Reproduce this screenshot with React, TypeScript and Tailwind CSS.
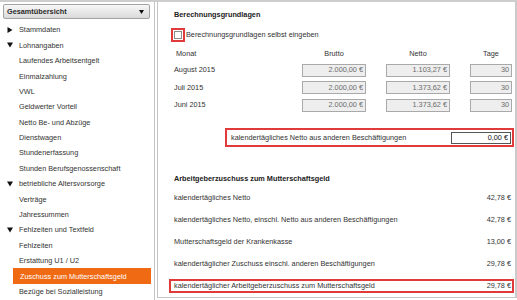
import React from "react";

const nav: { label: string; kind: "open" | "closed" | "item" | "active" }[] = [
  { label: "Stammdaten", kind: "closed" },
  { label: "Lohnangaben", kind: "open" },
  { label: "Laufendes Arbeitsentgelt", kind: "item" },
  { label: "Einmalzahlung", kind: "item" },
  { label: "VWL", kind: "item" },
  { label: "Geldwerter Vorteil", kind: "item" },
  { label: "Netto Be- und Abzüge", kind: "item" },
  { label: "Dienstwagen", kind: "item" },
  { label: "Stundenerfassung", kind: "item" },
  { label: "Stunden Berufsgenossenschaft", kind: "item" },
  { label: "betriebliche Altersvorsorge", kind: "open" },
  { label: "Verträge", kind: "item" },
  { label: "Jahressummen", kind: "item" },
  { label: "Fehlzeiten und Textfeld", kind: "open" },
  { label: "Fehlzeiten", kind: "item" },
  { label: "Erstattung U1 / U2", kind: "item" },
  { label: "Zuschuss zum Mutterschaftsgeld", kind: "active" },
  { label: "Bezüge bei Sozialleistung", kind: "item" },
];

const months = [
  { m: "August 2015", brutto: "2.000,00 €", netto: "1.103,27 €", tage: "30" },
  { m: "Juli 2015", brutto: "2.000,00 €", netto: "1.373,62 €", tage: "30" },
  { m: "Juni 2015", brutto: "2.000,00 €", netto: "1.373,62 €", tage: "30" },
];

const zuschuss = [
  { label: "kalendertägliches Netto", value: "42,78 €" },
  { label: "kalendertägliches Netto, einschl. Netto aus anderen Beschäftigungen", value: "42,78 €" },
  { label: "Mutterschaftsgeld der Krankenkasse", value: "13,00 €" },
  { label: "kalendertäglicher Zuschuss einschl. anderen Beschäftigungen", value: "29,78 €" },
];

function Triangle({ open }: { open: boolean }) {
  return (
    <svg width="6" height="6" viewBox="0 0 6 6" className="mr-[6px] shrink-0">
      {open ? <polygon points="0,0.5 6,0.5 3,5.5" fill="#111" /> : <polygon points="0.5,0 5.5,3 0.5,6" fill="#111" />}
    </svg>
  );
}

function Field({ value, w }: { value: string; w: string }) {
  return (
    <div className={`${w} h-[13px] border border-[#a9a9a9] bg-[#eeeeee] flex items-center justify-end pr-[2px] text-[#6b6b6b]`}>
      {value}
    </div>
  );
}

export default function App() {
  return (
    <div className="w-[517px] h-[300px] bg-white border-t-2 border-[#cdcdcd] flex overflow-hidden text-[7.3px] leading-none text-[#333] font-['Liberation_Sans',Arial,sans-serif]">
      {/* Linke Navigation */}
      <div className="w-[155px] h-full border-r border-[#c4c4c4] shrink-0">
        <div className="ml-[3px] mt-[2px] w-[147px] h-[15px] border border-[#a3a3a3] rounded-[2px] bg-gradient-to-b from-[#f7f7f7] to-[#dadada] flex items-center justify-between pl-[3px] pr-[5px]">
          <span className="font-bold text-[#2a2a2a]">Gesamtübersicht</span>
          <svg width="5" height="4" viewBox="0 0 5 4">
            <polygon points="0,0 5,0 2.5,4" fill="#111" />
          </svg>
        </div>
        <div className="mt-[3.3px]">
          {nav.map((n) =>
            n.kind === "active" ? (
              <div key={n.label} className="h-[15.4px] flex items-center">
                <div className="ml-[13px] w-[138px] h-[16px] bg-[#f06a14] text-white flex items-center pl-[7px]">{n.label}</div>
              </div>
            ) : (
              <div key={n.label} className={`h-[15.4px] flex items-center ${n.kind === "item" ? "pl-[19px]" : "pl-[7px]"}`}>
                {n.kind !== "item" && <Triangle open={n.kind === "open"} />}
                <span>{n.label}</span>
              </div>
            )
          )}
        </div>
      </div>

      {/* Rechter Inhalt */}
      <div className="ml-[2px] w-[360px] h-[296px] border-l border-r-2 border-b border-l-[#c4c4c4] border-r-[#cbcbcb] border-b-[#c4c4c4] flex flex-col">
        <div className="pl-[16px] mt-[8px] h-[10px] flex items-center font-bold text-[#222]">Berechnungsgrundlagen</div>

        <div className="mt-[8px] ml-[13px] flex items-center h-[14px]">
          <div className="w-[14px] h-[14px] border-2 border-[#e03a3a] flex items-center justify-center">
            <div className="w-[8px] h-[8px] border border-[#8c8c8c] bg-white" />
          </div>
          <span className="ml-[1px]">Berechnungsgrundlagen selbst eingeben</span>
        </div>

        <div className="mt-[7px] h-[10px] flex items-center pl-[16px]">
          <span className="w-[128px] pl-[2px]">Monat</span>
          <span className="w-[64px] text-center">Brutto</span>
          <span className="w-[64px] ml-[20px] text-center">Netto</span>
          <span className="w-[42px] ml-[20px] text-center">Tage</span>
        </div>

        <div className="mt-[3px]">
          {months.map((r) => (
            <div key={r.m} className="h-[17.5px] flex items-center pl-[16px]">
              <span className="w-[128px]">{r.m}</span>
              <Field value={r.brutto} w="w-[64px]" />
              <div className="ml-[20px]">
                <Field value={r.netto} w="w-[64px]" />
              </div>
              <div className="ml-[20px]">
                <Field value={r.tage} w="w-[42px]" />
              </div>
            </div>
          ))}
        </div>

        <div className="mt-[14px] ml-[67px] mr-[1px] h-[20px] border-2 border-[#e03a3a] flex items-center justify-between pl-[4px] pr-[1px]">
          <span>kalendertägliches Netto aus anderen Beschäftigungen</span>
          <div className="w-[60px] h-[12px] border border-[#555] bg-white flex items-center justify-end pr-[2px] text-[#111]">0,00 €</div>
        </div>

        <div className="mt-[26px] h-[10px] pl-[16px] flex items-center font-bold text-[#222]">Arbeitgeberzuschuss zum Mutterschaftsgeld</div>

        <div className="mt-[4px]">
          {zuschuss.map((z) => (
            <div key={z.label} className="h-[22px] flex items-center justify-between pl-[16px] pr-[4px]">
              <span>{z.label}</span>
              <span>{z.value}</span>
            </div>
          ))}
          <div className="h-[22px] flex items-center">
            <div className="ml-[11px] mr-[1px] flex-1 h-[14px] border-2 border-[#e03a3a] flex items-center justify-between pl-[3px] pr-[1px]">
              <span>kalendertäglicher Arbeitgeberzuschuss zum Mutterschaftsgeld</span>
              <span>29,78 €</span>
            </div>
          </div>
        </div>
      </div>
    </div>
  );
}
